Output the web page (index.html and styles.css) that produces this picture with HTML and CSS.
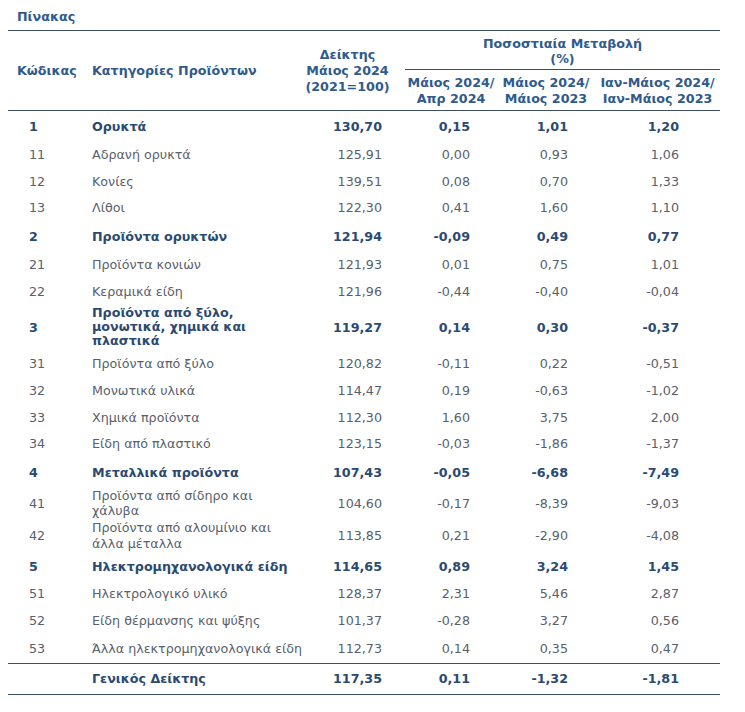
FILE: index.html
```html
<!DOCTYPE html>
<html lang="el">
<head>
<meta charset="utf-8">
<title>Πίνακας</title>
<link rel="stylesheet" href="styles.css">
</head>
<body>
<div class="title">Πίνακας</div>
<table class="tbl">
  <colgroup>
    <col class="c1"><col class="c2"><col class="c3"><col class="c4"><col class="c5"><col class="c6">
  </colgroup>
  <thead>
    <tr class="hA">
      <th rowspan="2" class="h-code">Κώδικας</th>
      <th rowspan="2" class="h-cat">Κατηγορίες Προϊόντων</th>
      <th rowspan="2" class="h-idx">Δείκτης<br>Μάιος 2024<br>(2021=100)</th>
      <th colspan="3" class="h-pct">Ποσοστιαία Μεταβολή<br>(%)</th>
    </tr>
    <tr class="hB">
      <th class="h-sub">Μάιος 2024/<br>Απρ 2024</th>
      <th class="h-sub">Μάιος 2024/<br>Μάιος 2023</th>
      <th class="h-sub">Ιαν-Μάιος 2024/<br>Ιαν-Μάιος 2023</th>
    </tr>
  </thead>
  <tbody>
    <tr class="grp"><td class="code">1</td><td class="cat">Ορυκτά</td><td class="idx">130,70</td><td class="n4">0,15</td><td class="n5">1,01</td><td class="n6">1,20</td></tr>
    <tr class="reg"><td class="code">11</td><td class="cat">Αδρανή ορυκτά</td><td class="idx">125,91</td><td class="n4">0,00</td><td class="n5">0,93</td><td class="n6">1,06</td></tr>
    <tr class="reg"><td class="code">12</td><td class="cat">Κονίες</td><td class="idx">139,51</td><td class="n4">0,08</td><td class="n5">0,70</td><td class="n6">1,33</td></tr>
    <tr class="reg"><td class="code">13</td><td class="cat">Λίθοι</td><td class="idx">122,30</td><td class="n4">0,41</td><td class="n5">1,60</td><td class="n6">1,10</td></tr>
    <tr class="grp"><td class="code">2</td><td class="cat">Προϊόντα ορυκτών</td><td class="idx">121,94</td><td class="n4">-0,09</td><td class="n5">0,49</td><td class="n6">0,77</td></tr>
    <tr class="reg"><td class="code">21</td><td class="cat">Προϊόντα κονιών</td><td class="idx">121,93</td><td class="n4">0,01</td><td class="n5">0,75</td><td class="n6">1,01</td></tr>
    <tr class="reg"><td class="code">22</td><td class="cat">Κεραμικά είδη</td><td class="idx">121,96</td><td class="n4">-0,44</td><td class="n5">-0,40</td><td class="n6">-0,04</td></tr>
    <tr class="grp three"><td class="code">3</td><td class="cat">Προϊόντα από ξύλο,<br>μονωτικά, χημικά και<br>πλαστικά</td><td class="idx">119,27</td><td class="n4">0,14</td><td class="n5">0,30</td><td class="n6">-0,37</td></tr>
    <tr class="reg"><td class="code">31</td><td class="cat">Προϊόντα από ξύλο</td><td class="idx">120,82</td><td class="n4">-0,11</td><td class="n5">0,22</td><td class="n6">-0,51</td></tr>
    <tr class="reg"><td class="code">32</td><td class="cat">Μονωτικά υλικά</td><td class="idx">114,47</td><td class="n4">0,19</td><td class="n5">-0,63</td><td class="n6">-1,02</td></tr>
    <tr class="reg"><td class="code">33</td><td class="cat">Χημικά προϊόντα</td><td class="idx">112,30</td><td class="n4">1,60</td><td class="n5">3,75</td><td class="n6">2,00</td></tr>
    <tr class="reg"><td class="code">34</td><td class="cat">Είδη από πλαστικό</td><td class="idx">123,15</td><td class="n4">-0,03</td><td class="n5">-1,86</td><td class="n6">-1,37</td></tr>
    <tr class="grp"><td class="code">4</td><td class="cat">Μεταλλικά προϊόντα</td><td class="idx">107,43</td><td class="n4">-0,05</td><td class="n5">-6,68</td><td class="n6">-7,49</td></tr>
    <tr class="reg two"><td class="code">41</td><td class="cat">Προϊόντα από σίδηρο και<br>χάλυβα</td><td class="idx">104,60</td><td class="n4">-0,17</td><td class="n5">-8,39</td><td class="n6">-9,03</td></tr>
    <tr class="reg two"><td class="code">42</td><td class="cat">Προϊόντα από αλουμίνιο και<br>άλλα μέταλλα</td><td class="idx">113,85</td><td class="n4">0,21</td><td class="n5">-2,90</td><td class="n6">-4,08</td></tr>
    <tr class="grp short"><td class="code">5</td><td class="cat">Ηλεκτρομηχανολογικά είδη</td><td class="idx">114,65</td><td class="n4">0,89</td><td class="n5">3,24</td><td class="n6">1,45</td></tr>
    <tr class="reg"><td class="code">51</td><td class="cat">Ηλεκτρολογικό υλικό</td><td class="idx">128,37</td><td class="n4">2,31</td><td class="n5">5,46</td><td class="n6">2,87</td></tr>
    <tr class="reg"><td class="code">52</td><td class="cat">Είδη θέρμανσης και ψύξης</td><td class="idx">101,37</td><td class="n4">-0,28</td><td class="n5">3,27</td><td class="n6">0,56</td></tr>
    <tr class="reg last"><td class="code">53</td><td class="cat">Άλλα ηλεκτρομηχανολογικά είδη</td><td class="idx">112,73</td><td class="n4">0,14</td><td class="n5">0,35</td><td class="n6">0,47</td></tr>
  </tbody>
  <tfoot>
    <tr class="total"><td class="code"></td><td class="cat">Γενικός Δείκτης</td><td class="idx">117,35</td><td class="n4">0,11</td><td class="n5">-1,32</td><td class="n6">-1,81</td></tr>
  </tfoot>
</table>
</body>
</html>
```
FILE: styles.css
```css
html, body {
  margin: 0;
  padding: 0;
  background: #ffffff;
}
body {
  margin: 8px;
  font-family: "DejaVu Sans", Verdana, sans-serif;
  font-size: 12.7px;
  color: #58606c;
}
.title {
  height: 22px;
  line-height: 18px;
  padding-left: 9px;
  font-weight: bold;
  font-size: 12.7px;
  color: #2f5a8c;
}
.tbl {
  width: 712px;
  table-layout: fixed;
  border-collapse: separate;
  border-spacing: 0;
  border-top: 1px solid #3d4f66;
  font-size: 12.7px;
}
.c1 { width: 77px; }
.c2 { width: 215px; }
.c3 { width: 105px; }
.c4 { width: 92px; }
.c5 { width: 98px; }
.c6 { width: 125px; }

th {
  font-weight: bold;
  color: #2f5a8c;
  line-height: 16px;
  padding: 0;
  text-align: center;
  vertical-align: middle;
  white-space: nowrap;
}
.hA { height: 39px; }
.hB { height: 41px; }
.h-code, .h-cat, .h-idx, .h-sub { border-bottom: 1px solid #3d4f66; }
.h-pct { border-bottom: 1px solid #3d4f66; line-height: 15px; padding-top: 2px; }
.h-code { text-align: left; padding-left: 9px; }
.h-cat { text-align: left; padding-left: 7px; }
.h-idx { padding-right: 10px; }
.h-sub { padding-top: 2px; }

td {
  padding: 0;
  vertical-align: middle;
  white-space: nowrap;
  line-height: 15px;
}
.code { padding-left: 21px; }
.cat { padding-left: 7px; }
.idx { text-align: right; padding-right: 23px; }
.n4 { text-align: right; padding-right: 27px; }
.n5 { text-align: right; padding-right: 27px; }
.n6 { text-align: right; padding-right: 41px; }

.reg { height: 26.7px; }
.grp { height: 30px; font-weight: bold; color: #2b4a72; }
.grp.three { height: 46px; }
.grp.three .cat { line-height: 14px; }
.grp.short { height: 28px; }
.reg.two { height: 32.5px; }
.reg.two .cat { line-height: 15.5px; }
.reg.last { height: 30px; }
.last td { border-bottom: 1px solid #3d4f66; }
.total { height: 31px; font-weight: bold; color: #2b4a72; }
.total td { border-bottom: 1px solid #3d4f66; }
```
